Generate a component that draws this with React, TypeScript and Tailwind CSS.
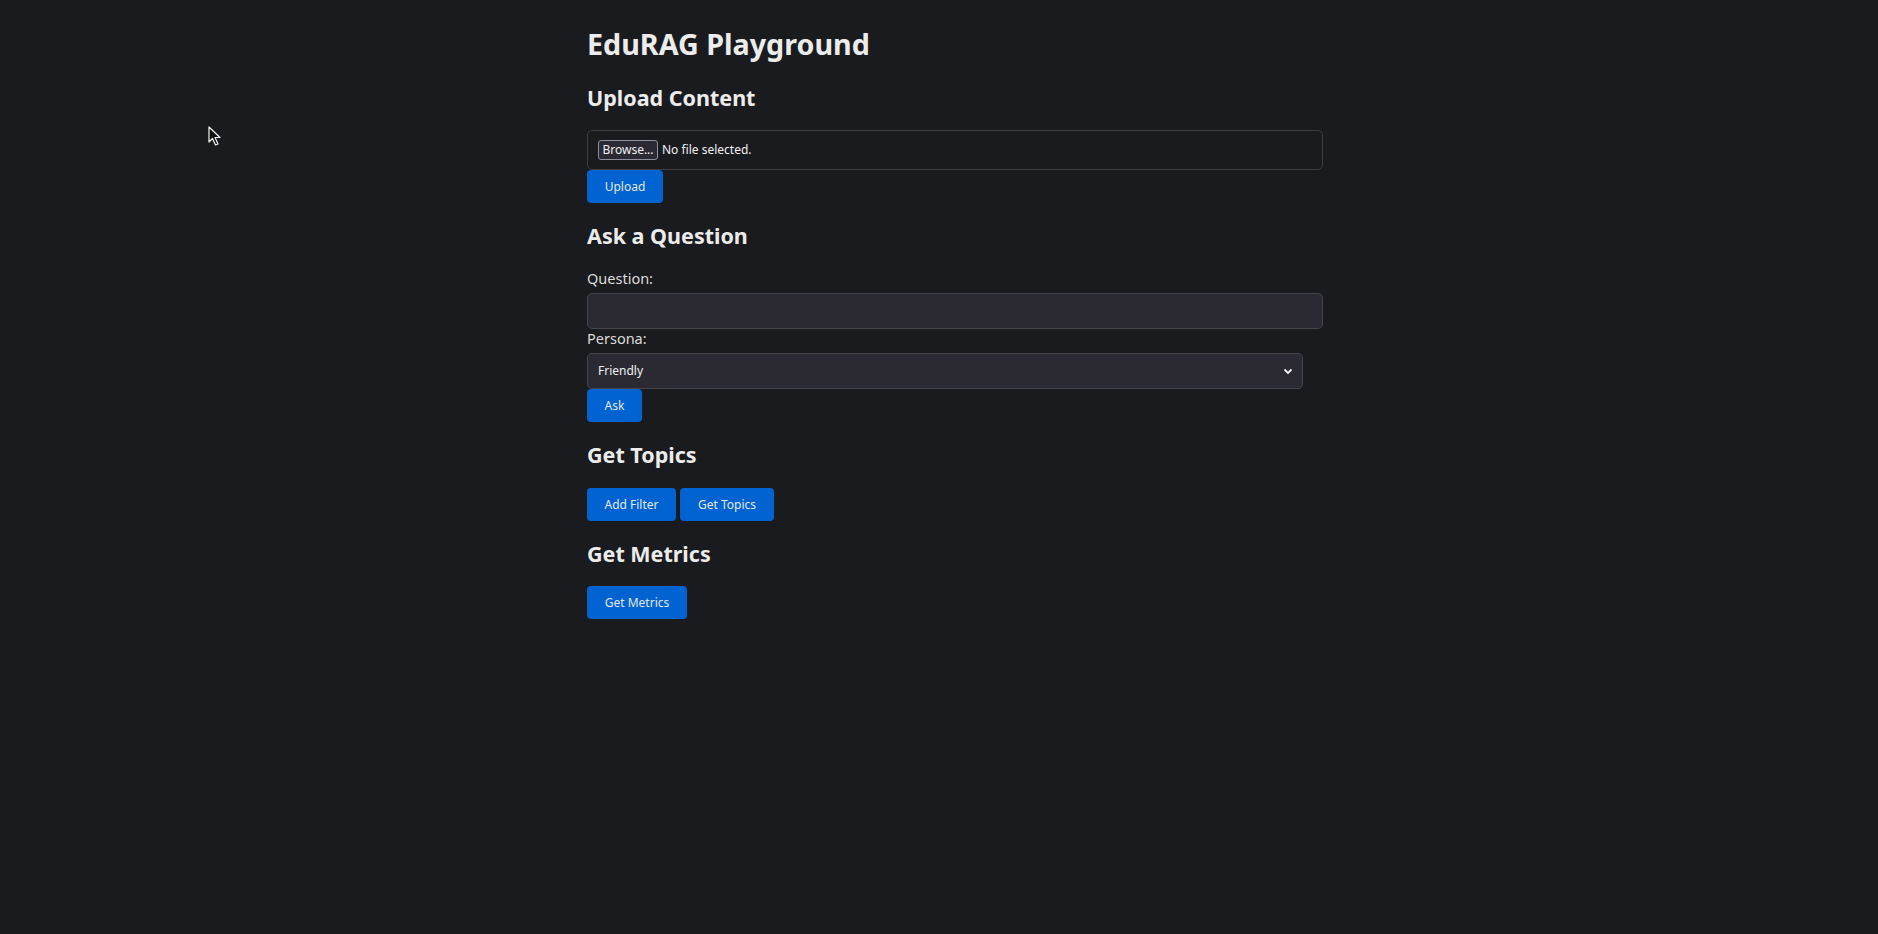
import React from "react";

const font = { fontFamily: '"Noto Sans", "Open Sans", sans-serif' };

function Btn({ children, w }: { children: React.ReactNode; w: string }) {
  return (
    <button
      className={`h-[33px] ${w} rounded-[4px] bg-[#0063d1] pt-[1px] text-[12px] text-[#e4e8ee] flex items-center justify-center`}
      style={font}
    >
      {children}
    </button>
  );
}

export default function App() {
  return (
    <div className="min-h-[934px] w-full bg-[#1a1b1e] relative" style={font}>
      <svg
        className="absolute left-[208px] top-[126px]"
        width="14"
        height="21"
        viewBox="0 0 14 21"
      >
        <path
          d="M1 1 L1 16 L4.5 12.5 L7.5 19 L10 18 L7 11.5 L12 11.5 Z"
          fill="#111"
          stroke="#f2f2f2"
          strokeWidth="1.2"
          strokeLinejoin="round"
        />
      </svg>
      <div className="mx-auto w-[704px] flex flex-col items-start pt-[24px]">
        <h1 className="text-[28.7px] leading-[40px] font-bold text-[#ececec]">
          EduRAG Playground
        </h1>

        <h2 className="mt-[20px] text-[21.5px] leading-[28px] font-bold text-[#ececec]">
          Upload Content
        </h2>
        <div className="mt-[18px] h-[40px] w-[736px] shrink-0 rounded-[5px] border border-[#3d3e44] flex items-center pl-[10px]">
          <span className="h-[20px] w-[60px] rounded-[3px] border border-[#8f8f9d] bg-[#2b2a33] text-[12px] text-[#f0f0f4] flex items-center justify-center">
            Browse...
          </span>
          <span className="ml-[4px] text-[12px] text-[#f0f0f4]">No file selected.</span>
        </div>
        <Btn w="w-[76px]">Upload</Btn>

        <h2 className="mt-[19px] text-[21.5px] leading-[28px] font-bold text-[#ececec]">
          Ask a Question
        </h2>
        <label className="mt-[19px] text-[14.5px] leading-[19px] h-[24px] text-[#dcdcdc]">
          Question:
        </label>
        <div className="h-[36px] w-[736px] shrink-0 rounded-[5px] border border-[#45464c] bg-[#2b2a33]" />
        <label className="text-[14.5px] leading-[19px] h-[24px] text-[#dcdcdc]">Persona:</label>
        <div className="h-[36px] w-[716px] shrink-0 rounded-[5px] border border-[#45464c] bg-[#2b2a33] flex items-center justify-between pl-[10px] pr-[9px]">
          <span className="text-[12px] text-[#f0f0f4]">Friendly</span>
          <svg width="10" height="8" viewBox="0 0 10 8">
            <path d="M1.5 2.5 L5 6 L8.5 2.5" fill="none" stroke="#f0f0f4" strokeWidth="1.8" />
          </svg>
        </div>
        <Btn w="w-[55px]">Ask</Btn>

        <h2 className="mt-[19px] text-[21.5px] leading-[28px] font-bold text-[#ececec]">
          Get Topics
        </h2>
        <div className="mt-[19px] flex gap-[4px]">
          <Btn w="w-[89px]">Add Filter</Btn>
          <Btn w="w-[94px]">Get Topics</Btn>
        </div>

        <h2 className="mt-[19px] text-[21.5px] leading-[28px] font-bold text-[#ececec]">
          Get Metrics
        </h2>
        <div className="mt-[18px]">
          <Btn w="w-[100px]">Get Metrics</Btn>
        </div>
      </div>
    </div>
  );
}
